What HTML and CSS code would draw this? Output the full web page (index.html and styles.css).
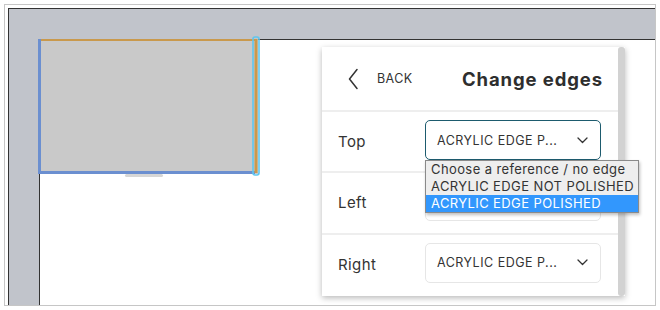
FILE: index.html
```html
<!DOCTYPE html>
<html>
<head>
<meta charset="utf-8">
<link rel="stylesheet" href="styles.css">
</head>
<body>
<div class="frame">
  <div class="workspace">
    <div class="canvas">
      <svg class="shape" width="226" height="146" viewBox="0 0 226 146">
        <rect x="3" y="3" width="218" height="135" fill="#c9c9c9"/>
        <rect x="88" y="138" width="38" height="3" rx="1.5" fill="#d6d6d6"/>
        <line x1="3" y1="4" x2="218" y2="4" stroke="#c9994c" stroke-width="2"/>
        <line x1="2.5" y1="3" x2="2.5" y2="138" stroke="#6b8fd0" stroke-width="3"/>
        <line x1="2" y1="136.5" x2="218" y2="136.5" stroke="#6b8fd0" stroke-width="3"/>
        <rect x="216" y="1" width="6" height="138" rx="2" fill="none" stroke="#5ec6ee" stroke-width="1.6"/>
        <line x1="219" y1="3" x2="219" y2="137" stroke="#c9994c" stroke-width="3"/>
      </svg>
      <div class="panel">
        <div class="panel-body">
          <div class="header">
            <div class="back">
              <svg class="back-icon" width="10" height="22" viewBox="0 0 10 22"><path d="M9 1.5 L1.5 11 L9 20.5" fill="none" stroke="#333" stroke-width="1.5" stroke-linecap="round" stroke-linejoin="round"/></svg>
              <span class="back-text">BACK</span>
            </div>
            <div class="title">Change edges</div>
          </div>
          <div class="row">
            <div class="label">Top</div>
            <div class="select active">
              <span>ACRYLIC EDGE P...</span>
              <svg class="chev" width="11" height="7" viewBox="0 0 11 7"><path d="M1 1 L5.5 5.5 L10 1" fill="none" stroke="#333" stroke-width="1.3" stroke-linecap="round" stroke-linejoin="round"/></svg>
            </div>
            <div class="options">
              <div class="option">Choose a reference / no edge</div>
              <div class="option">ACRYLIC EDGE NOT POLISHED</div>
              <div class="option selected">ACRYLIC EDGE POLISHED</div>
            </div>
          </div>
          <div class="row">
            <div class="label">Left</div>
            <div class="select">
              <span class="hidden-text">ACRYLIC EDGE P...</span>
              <svg class="chev" width="11" height="7" viewBox="0 0 11 7"><path d="M1 1 L5.5 5.5 L10 1" fill="none" stroke="#333" stroke-width="1.3" stroke-linecap="round" stroke-linejoin="round"/></svg>
            </div>
          </div>
          <div class="row">
            <div class="label">Right</div>
            <div class="select">
              <span>ACRYLIC EDGE P...</span>
              <svg class="chev" width="11" height="7" viewBox="0 0 11 7"><path d="M1 1 L5.5 5.5 L10 1" fill="none" stroke="#333" stroke-width="1.3" stroke-linecap="round" stroke-linejoin="round"/></svg>
            </div>
          </div>
        </div>
        <div class="scrollbar"></div>
      </div>
    </div>
  </div>
</div>
</body>
</html>
```

FILE: styles.css
```css
* { box-sizing: border-box; }
html, body { margin: 0; padding: 0; background: #fff; }
body {
  font-family: Inter, "Noto Sans", sans-serif;
  color: #333;
  width: 660px;
  height: 310px;
  overflow: hidden;
}
.frame {
  margin: 4px 0 0 4px;
  width: 652px;
  height: 302px;
  border: 1px solid #c6c6c6;
  padding: 3px 0 0 3px;
  display: flex;
}
.workspace {
  flex: 1;
  display: flex;
  background: #c1c4cb;
  border-top: 1px solid #333;
  border-left: 1px solid #333;
  padding: 30px 0 0 30px;
}
.canvas {
  flex: 1;
  position: relative;
  background: #fff;
  border-top: 1px solid #333;
  border-left: 1px solid #333;
}
.shape {
  position: absolute;
  left: -3px;
  top: -4px;
}
.panel {
  position: absolute;
  left: 282px;
  top: 7px;
  width: 303px;
  height: 249px;
  background: #fff;
  box-shadow: 0 2px 6px rgba(0, 0, 0, 0.28);
  display: flex;
}
.panel-body {
  flex: 1;
  display: flex;
  flex-direction: column;
}
.scrollbar {
  width: 7px;
  background: #d2d2d2;
  border-radius: 3px;
}
.header {
  height: 66px;
  border-bottom: 2px solid #eeeeee;
  display: flex;
  align-items: center;
  justify-content: space-between;
  padding: 0 15px 0 26px;
}
.back {
  display: flex;
  align-items: center;
  gap: 19px;
}
.back-icon { display: block; }
.back-text {
  font-size: 12.5px;
  letter-spacing: 0.4px;
}
.title {
  font-size: 18.5px;
  font-weight: 700;
  color: #2e2e2e;
  letter-spacing: 0.9px;
}
.row {
  position: relative;
  height: 62px;
  border-bottom: 2px solid #eeeeee;
  display: flex;
  align-items: flex-start;
  padding: 8px 17px 0 16px;
}
.row:last-child { border-bottom: none; }
.label {
  width: 87px;
  height: 40px;
  line-height: 40px;
  padding-top: 2px;
  font-size: 15px;
  letter-spacing: 0.4px;
}
.select {
  flex: 1;
  height: 40px;
  border: 1px solid #e6e6e6;
  border-radius: 5px;
  display: flex;
  align-items: center;
  justify-content: space-between;
  padding: 0 12px 0 11px;
  font-size: 12.5px;
  letter-spacing: 0.5px;
}
.select.active { border-color: #1d5b6e; }
.hidden-text { visibility: hidden; }
.options {
  position: absolute;
  left: 103px;
  top: 48px;
  width: 214px;
  background: #eeeeee;
  border: 1px solid #8a8a8a;
  box-shadow: 1px 2px 3px rgba(0, 0, 0, 0.25);
  z-index: 2;
  padding: 0;
}
.option {
  height: 17px;
  line-height: 17px;
  padding-left: 5px;
  font-size: 13px;
  color: #333;
  letter-spacing: 0.4px;
  white-space: nowrap;
}
.option.selected {
  background: #3297fd;
  color: #fff;
}
```
